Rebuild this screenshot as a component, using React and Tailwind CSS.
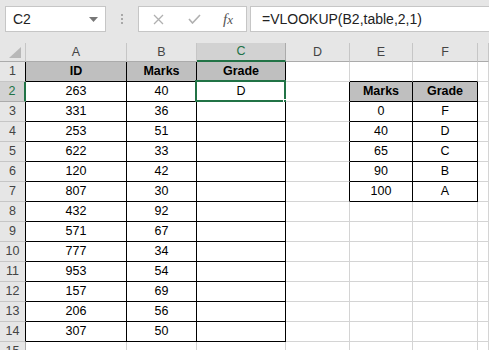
import React from "react";

const colA = [263, 331, 253, 622, 120, 807, 432, 571, 777, 953, 157, 206, 307];
const colB = [40, 36, 51, 33, 42, 30, 92, 67, 34, 54, 69, 56, 50];
const lookup = [
  ["Marks", "Grade"],
  ["0", "F"],
  ["40", "D"],
  ["65", "C"],
  ["90", "B"],
  ["100", "A"],
];
const letters = ["A", "B", "C", "D", "E", "F", ""];

// value + style info for a cell; row is 1-based, col 0..6 (A..G)
function cellInfo(row, col) {
  let text = "";
  let bold = false;
  let fill = false;
  let black = false;
  if (col <= 2 && row <= 14) {
    black = true;
    if (row === 1) {
      text = ["ID", "Marks", "Grade"][col];
      bold = true;
      fill = true;
    } else if (col === 0) text = colA[row - 2];
    else if (col === 1) text = colB[row - 2];
    else if (row === 2) text = "D";
  }
  if ((col === 4 || col === 5) && row >= 2 && row <= 7) {
    black = true;
    text = lookup[row - 2][col - 4];
    if (row === 2) {
      bold = true;
      fill = true;
    }
  }
  return { text, bold, fill, black };
}

function Cell({ row, col }) {
  const info = cellInfo(row, col);
  const right = cellInfo(row, col + 1).black || info.black;
  const below = row < 15 && cellInfo(row + 1, col).black;
  const bottom = info.black || below;
  return (
    <div
      className={`relative h-[20px] flex items-center justify-center border-r border-b text-[12.5px] text-black ${
        info.fill ? "bg-[#bfbfbf]" : "bg-white"
      } ${info.bold ? "font-bold" : ""} ${
        right ? "border-r-black" : "border-r-[#d4d4d4]"
      } ${bottom ? "border-b-black" : "border-b-[#d4d4d4]"}`}
    >
      {info.text}
      {row === 2 && col === 2 && (
        <>
          <div className="absolute -left-[2px] -top-[2px] -right-[1px] -bottom-[1px] border-2 border-[#217346]" />
          <div className="absolute -right-[3px] -bottom-[3px] w-[5px] h-[5px] bg-[#217346] border border-white" />
        </>
      )}
    </div>
  );
}

function FormulaBar() {
  return (
    <div className="h-[43px] bg-[#e6e6e6] flex items-start pt-[6px] pl-[5px]">
      <div className="w-[101px] h-[26px] bg-white border border-[#c6c6c6] flex items-center justify-between pl-[7px] pr-[7px] text-[14px] text-[#222]">
        <span>C2</span>
        <svg width="9" height="5" viewBox="0 0 9 5">
          <path d="M0 0h9L4.5 5z" fill="#777" />
        </svg>
      </div>
      <div className="w-[32px] h-[26px] flex flex-col items-center justify-center gap-[2px]">
        <span className="w-[2px] h-[2px] bg-[#a8a8a8]" />
        <span className="w-[2px] h-[2px] bg-[#a8a8a8]" />
        <span className="w-[2px] h-[2px] bg-[#a8a8a8]" />
      </div>
      <div className="w-[109px] h-[26px] bg-white border border-[#c6c6c6] flex items-center">
        <div className="w-[38px] flex justify-center">
          <svg width="11" height="11" viewBox="0 0 11 11">
            <path d="M1 1l9 9M10 1l-9 9" stroke="#b0b0b0" strokeWidth="1.3" />
          </svg>
        </div>
        <div className="w-[34px] flex justify-center">
          <svg width="13" height="10" viewBox="0 0 13 10">
            <path d="M1 5l3.5 4L12 1" stroke="#b0b0b0" strokeWidth="1.6" fill="none" />
          </svg>
        </div>
        <div className="w-[34px] flex justify-center items-baseline font-['Liberation_Serif',serif] italic text-[15px] leading-none text-[#555]">
          <span>f</span>
          <span className="text-[13px]">x</span>
        </div>
      </div>
      <div className="ml-[3px] flex-1 h-[26px] bg-white border border-r-0 border-[#c6c6c6] flex items-center pl-[11px] text-[14px] text-[#222]">
        =VLOOKUP(B2,table,2,1)
      </div>
    </div>
  );
}

export default function App() {
  const rows = Array.from({ length: 15 }, (_, i) => i + 1);
  return (
    <div className="w-[489px] h-[350px] overflow-hidden bg-white font-['Liberation_Sans',sans-serif]">
      <FormulaBar />
      <div className="grid grid-cols-[26px_101px_70px_89px_64px_63px_65px_11px]">
        {/* column headers */}
        <div className="h-[19px] bg-[#e6e6e6] border-r border-b border-r-[#c6c6c6] border-b-[#ababab] flex items-end justify-end pr-[4px] pb-[3px]">
          <svg width="12" height="11" viewBox="0 0 12 11">
            <path d="M12 0V11H0z" fill="#b8b8b8" />
          </svg>
        </div>
        {letters.map((l, i) => (
          <div
            key={i}
            className={`h-[19px] flex items-center justify-center text-[12.5px] border-r ${
              i === 2
                ? "bg-[#d2d2d2] text-[#217346] border-b-2 border-b-[#217346] border-r-[#ababab]"
                : "bg-[#e6e6e6] text-[#444] border-b border-b-[#ababab] border-r-[#c6c6c6]"
            }`}
          >
            {l}
          </div>
        ))}
        {rows.map((r) => (
          <React.Fragment key={r}>
            <div
              className={`h-[20px] flex items-center justify-center text-[12.5px] border-b ${
                r === 2
                  ? "bg-[#d2d2d2] text-[#217346] border-r-2 border-r-[#217346] border-b-[#ababab]"
                  : "bg-[#e6e6e6] text-[#444] border-r border-b-[#c6c6c6] " +
                    (r <= 14 ? "border-r-black" : "border-r-[#ababab]")
              }`}
            >
              {r}
            </div>
            {[0, 1, 2, 3, 4, 5, 6].map((c) => (
              <Cell key={c} row={r} col={c} />
            ))}
          </React.Fragment>
        ))}
      </div>
    </div>
  );
}
